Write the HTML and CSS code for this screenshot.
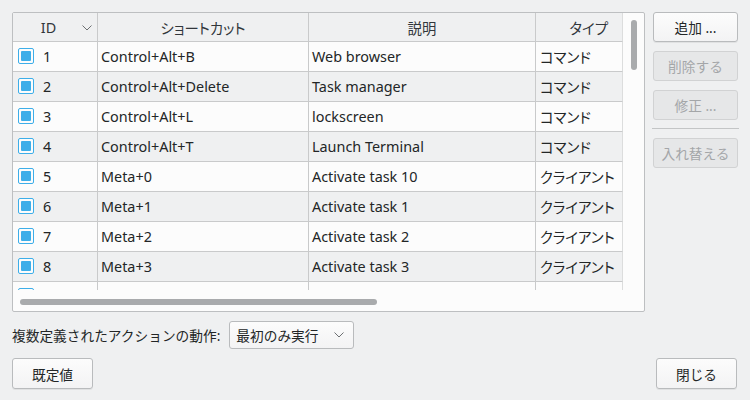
FILE: index.html
```html
<!DOCTYPE html>
<html lang="ja">
<head>
<meta charset="utf-8">
<title>ショートカット</title>
<link rel="stylesheet" href="styles.css">
</head>
<body>
<div class="dialog">
  <div class="top">
    <div class="frame">
      <div class="viewport">
        <div class="row head">
          <div class="cell hid"><span class="htext">ID</span><svg class="sort" width="10" height="6" viewBox="0 0 10 6"><path d="M0.5 0.5 L5 5 L9.5 0.5" fill="none" stroke="#6d7072" stroke-width="1"/></svg></div>
          <div class="cell hc">ショートカット</div>
          <div class="cell hc">説明</div>
          <div class="cell hr">タイプ</div>
        </div>
        <div class="row">
          <div class="cell cid"><span class="cb"><span class="cbf"></span></span>1</div>
          <div class="cell">Control+Alt+B</div>
          <div class="cell">Web browser</div>
          <div class="cell ct">コマンド</div>
        </div>
        <div class="row alt">
          <div class="cell cid"><span class="cb"><span class="cbf"></span></span>2</div>
          <div class="cell">Control+Alt+Delete</div>
          <div class="cell">Task manager</div>
          <div class="cell ct">コマンド</div>
        </div>
        <div class="row">
          <div class="cell cid"><span class="cb"><span class="cbf"></span></span>3</div>
          <div class="cell">Control+Alt+L</div>
          <div class="cell">lockscreen</div>
          <div class="cell ct">コマンド</div>
        </div>
        <div class="row alt">
          <div class="cell cid"><span class="cb"><span class="cbf"></span></span>4</div>
          <div class="cell">Control+Alt+T</div>
          <div class="cell">Launch Terminal</div>
          <div class="cell ct">コマンド</div>
        </div>
        <div class="row">
          <div class="cell cid"><span class="cb"><span class="cbf"></span></span>5</div>
          <div class="cell">Meta+0</div>
          <div class="cell">Activate task 10</div>
          <div class="cell ct">クライアント</div>
        </div>
        <div class="row alt">
          <div class="cell cid"><span class="cb"><span class="cbf"></span></span>6</div>
          <div class="cell">Meta+1</div>
          <div class="cell">Activate task 1</div>
          <div class="cell ct">クライアント</div>
        </div>
        <div class="row">
          <div class="cell cid"><span class="cb"><span class="cbf"></span></span>7</div>
          <div class="cell">Meta+2</div>
          <div class="cell">Activate task 2</div>
          <div class="cell ct">クライアント</div>
        </div>
        <div class="row alt">
          <div class="cell cid"><span class="cb"><span class="cbf"></span></span>8</div>
          <div class="cell">Meta+3</div>
          <div class="cell">Activate task 3</div>
          <div class="cell ct">クライアント</div>
        </div>
        <div class="row">
          <div class="cell cid"><span class="cb"><span class="cbf"></span></span></div>
          <div class="cell"></div>
          <div class="cell"></div>
          <div class="cell ct"></div>
        </div>
      </div>
      <div class="vscroll"><div class="vthumb"></div></div>
      <div class="hscroll"><div class="hthumb"></div></div>
      <div class="corner"></div>
    </div>
    <div class="side">
      <button class="btn">追加 ...</button>
      <button class="btn" disabled>削除する</button>
      <button class="btn" disabled>修正 ...</button>
      <div class="sep"></div>
      <button class="btn" disabled>入れ替える</button>
    </div>
  </div>
  <div class="option">
    <span class="label">複数定義されたアクションの動作:</span>
    <div class="combo"><span>最初のみ実行</span><svg width="10" height="6" viewBox="0 0 10 6"><path d="M0.5 0.5 L5 5 L9.5 0.5" fill="none" stroke="#6d7072" stroke-width="1"/></svg></div>
  </div>
  <div class="bottom">
    <button class="btn wide">既定値</button>
    <button class="btn wide">閉じる</button>
  </div>
</div>
</body>
</html>
```
FILE: styles.css
```css
* { box-sizing: border-box; }
html, body {
  margin: 0;
  padding: 0;
  background: #eff0f1;
  width: 750px;
  height: 400px;
  overflow: hidden;
}
body {
  font-family: "Noto Sans", "Noto Sans CJK JP", sans-serif;
  font-size: 13.7px;
  color: #232627;
}
.dialog {
  padding: 12px 12px 0 12px;
  display: flex;
  flex-direction: column;
}
.top {
  display: flex;
  gap: 8px;
  height: 300px;
}
.frame {
  width: 633px;
  height: 300px;
  border: 1px solid #bdbfc1;
  border-radius: 2px;
  background: #fcfcfc;
  display: grid;
  grid-template-columns: 610px 21px;
  grid-template-rows: 277px 21px;
}
.viewport {
  overflow: hidden;
}
.row {
  display: grid;
  grid-template-columns: 85px 211px 227px 87px;
  height: 30px;
  background: #fcfcfc;
  font-size: 14.4px;
  font-feature-settings: "palt";
}
.row.alt { background: #eff0f1; }
.row.head {
  height: 29px;
  background: #eff0f1;
}
.cell {
  border-right: 1px solid #c9cacb;
  border-bottom: 1px solid #c9cacb;
  display: flex;
  align-items: center;
  padding-left: 3px;
  white-space: nowrap;
  overflow: hidden;
}
.cell:last-child { border-right: 1px solid #dcdddd; }
.head .cell { color: #31363b; }
.hc { justify-content: center; padding-left: 0; }
.hr { justify-content: flex-end; padding-right: 14px; }
.hid { padding-left: 0; padding-right: 5px; }
.htext { flex: 1; text-align: center; padding-left: 2px; }
.sort { margin-top: 1px; }
.cid { padding-left: 5px; }
.ct { padding-left: 4px; }
.cb {
  width: 16px;
  height: 16px;
  border: 1px solid #3daee9;
  border-radius: 2px;
  background: #fcfcfc;
  padding: 2px;
  margin-right: 9px;
  margin-top: -1px;
  flex: none;
}
.cbf {
  display: block;
  width: 10px;
  height: 10px;
  background: #3daee9;
  border-radius: 1px;
}
.vscroll {
  padding: 7px 0 0 8px;
}
.vthumb {
  width: 6px;
  height: 50px;
  border-radius: 3px;
  background: #a9abad;
}
.hscroll {
  padding: 9px 0 0 7px;
}
.hthumb {
  width: 357px;
  height: 6px;
  border-radius: 3px;
  background: #a9abad;
}
.side {
  width: 86px;
  display: flex;
  flex-direction: column;
}
.btn {
  font-family: inherit;
  font-size: 13.7px;
  color: #232627;
  height: 30px;
  border: 1px solid #b9bbbd;
  border-radius: 3px;
  background: linear-gradient(#fcfcfc, #f3f3f4);
  box-shadow: 0 1px 0 rgba(0,0,0,0.06);
  padding: 0;
  margin: 0 0 9px 0;
}
.btn:disabled {
  color: #a4a6a8;
  background: #e6e7e8;
  border-color: #d1d2d3;
  box-shadow: none;
}
.sep {
  height: 1px;
  background: #c3c5c6;
  margin: -1px -1px 9px -1px;
}
.option {
  margin-top: 9px;
  display: flex;
  align-items: center;
  height: 28px;
}
.label { margin-right: 9px; }
.combo {
  width: 125px;
  height: 28px;
  border: 1px solid #b9bbbd;
  border-radius: 3px;
  background: linear-gradient(#fcfcfc, #f3f3f4);
  display: flex;
  align-items: center;
  justify-content: space-between;
  padding: 0 9px 0 6px;
}
.bottom {
  margin-top: 9px;
  display: flex;
  justify-content: space-between;
  padding-right: 1px;
}
.btn.wide { width: 81px; height: 31px; }
```
